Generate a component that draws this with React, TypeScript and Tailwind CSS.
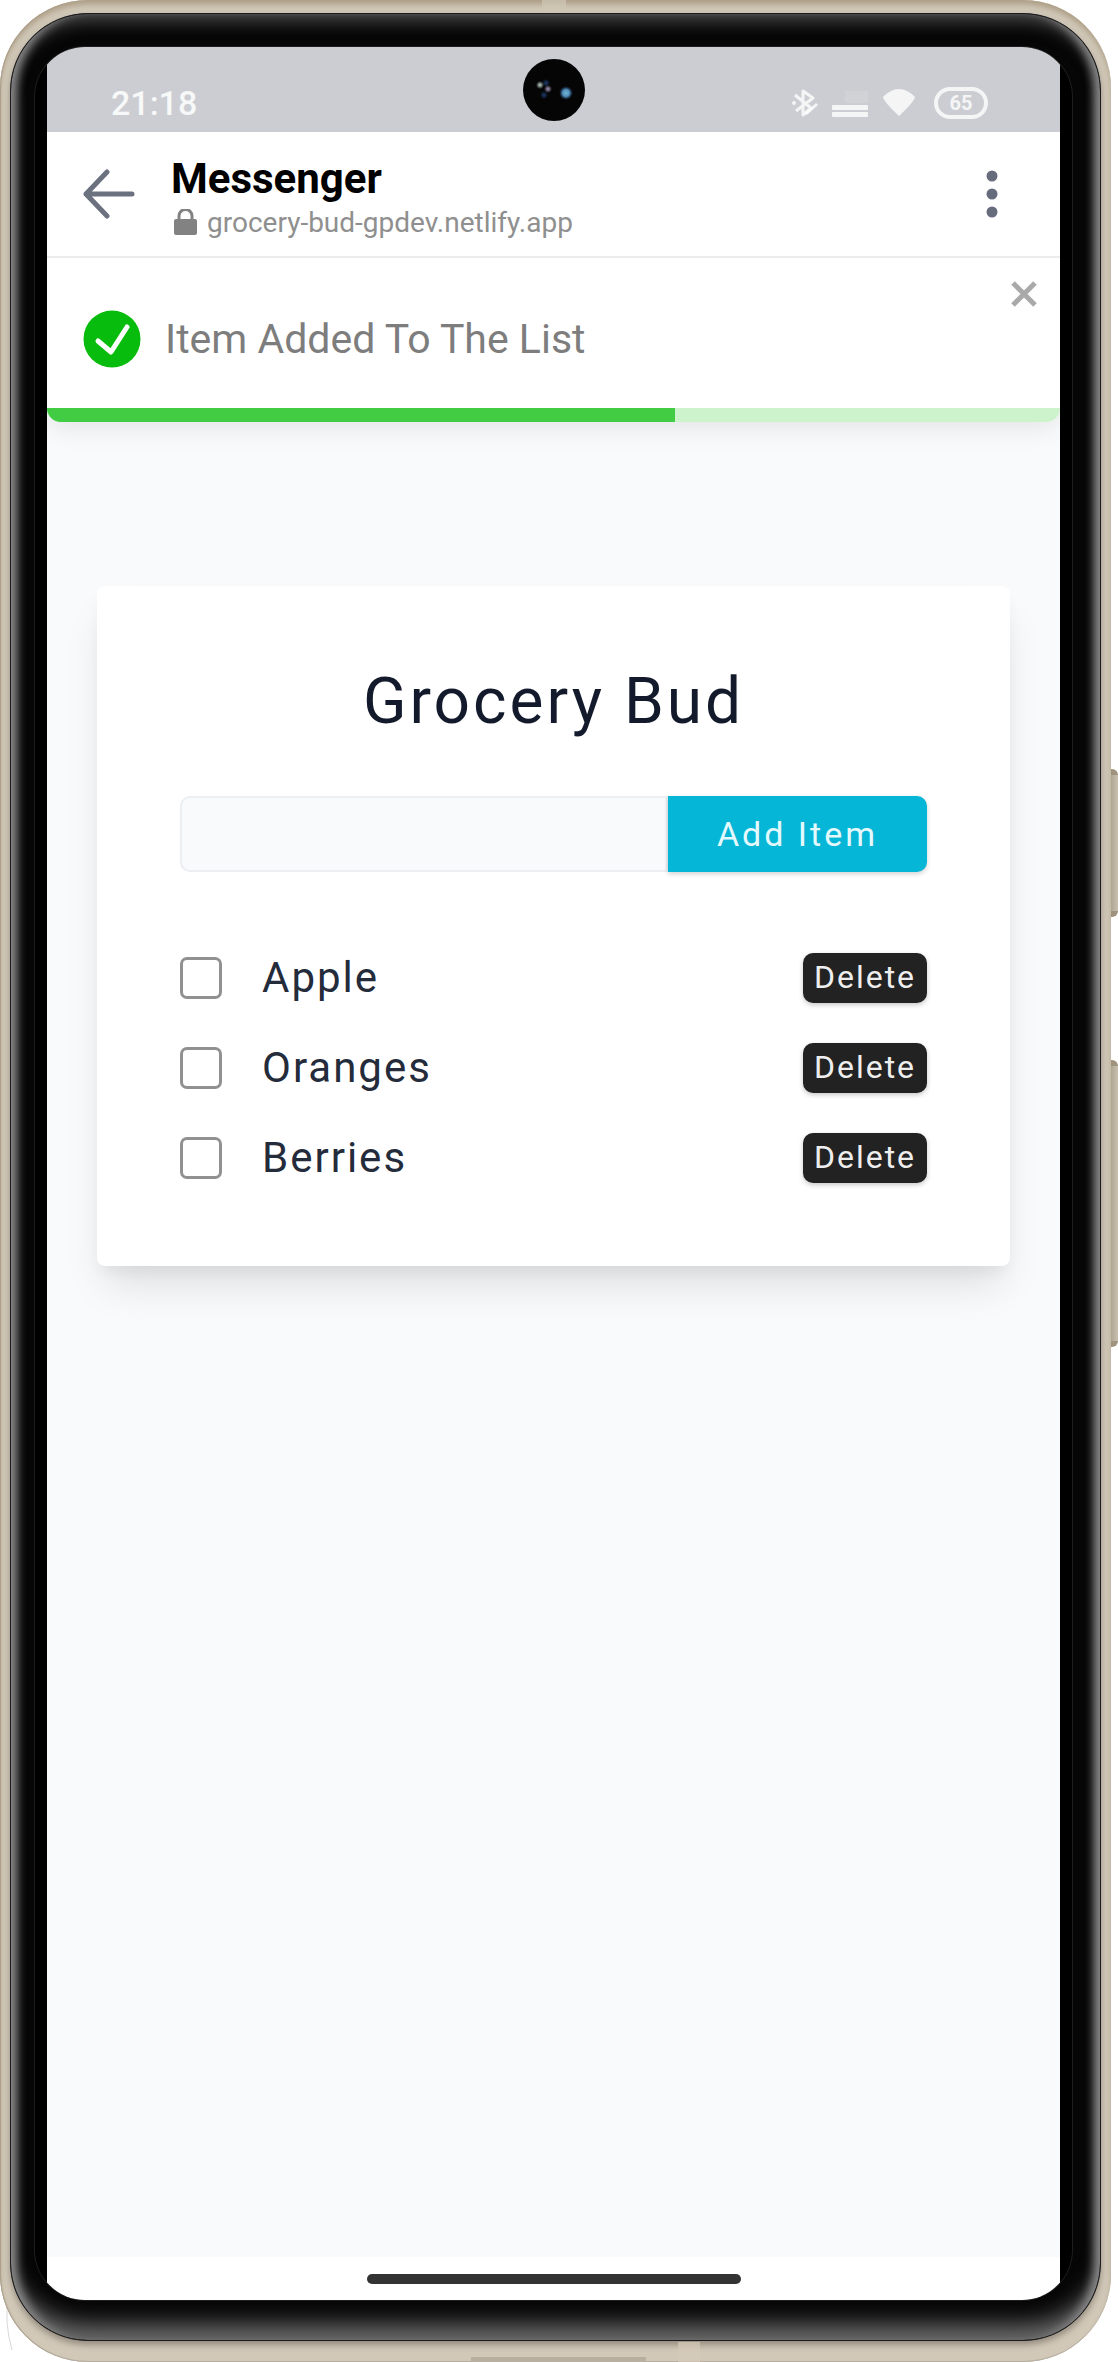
import React from "react";

const ITEMS = ["Apple", "Oranges", "Berries"];

function StatusIcons() {
  return (
    <div className="flex items-center text-white/80">
      <svg aria-hidden="true" width="28" height="30" viewBox="0 0 28 30" fill="none" stroke="currentColor" strokeWidth="3">
        <path d="M4 7 L20 20 L12 27 V3 L22 10 L5 23" strokeLinejoin="round" />
        <path d="M15 26 L26 16" />
        <circle cx="3" cy="15" r="2" fill="currentColor" stroke="none" />
      </svg>
      <svg aria-hidden="true" className="ml-3" width="38" height="30" viewBox="0 0 38 30" fill="currentColor">
        <rect x="14" y="3" width="23" height="12" opacity="0.12" />
        <rect x="1" y="17" width="36" height="5" rx="1" />
        <rect x="1" y="24" width="36" height="5" rx="1" />
      </svg>
      <svg aria-hidden="true" className="ml-3" width="36" height="30" viewBox="0 0 36 30" fill="currentColor">
        <path d="M2 9 Q18 -7 34 9 Q33 14 18 28 Q3 14 2 9 Z" />
      </svg>
      <span className="ml-[17px] flex h-8 w-[54px] items-center justify-center rounded-full border-4 border-current text-[20px] leading-none font-bold">
        65
      </span>
    </div>
  );
}

function StatusBar() {
  return (
    <div className="relative flex h-[85px] items-end justify-between bg-[#cbcdd2] pr-[72px] pb-[13px] pl-16">
      <span className="text-[34px] leading-8 font-medium text-white/85">21:18</span>
      <StatusIcons />
      <svg aria-hidden="true" className="absolute top-3 left-1/2 -translate-x-1/2" width="62" height="62" viewBox="0 0 62 62">
        <defs>
          <radialGradient id="lens">
            <stop offset="0" stopColor="#6fb4d6" />
            <stop offset="0.5" stopColor="#4f8db8" />
            <stop offset="1" stopColor="#1d3f73" stopOpacity="0" />
          </radialGradient>
          <radialGradient id="glint">
            <stop offset="0" stopColor="#c3d6cc" />
            <stop offset="1" stopColor="#c3d6cc" stopOpacity="0" />
          </radialGradient>
          <radialGradient id="violet">
            <stop offset="0" stopColor="#a79bc0" />
            <stop offset="1" stopColor="#a79bc0" stopOpacity="0" />
          </radialGradient>
          <radialGradient id="navy">
            <stop offset="0" stopColor="#1d3c70" />
            <stop offset="1" stopColor="#1d3c70" stopOpacity="0" />
          </radialGradient>
        </defs>
        <circle cx="31" cy="31" r="31" fill="#050505" />
        <circle cx="23" cy="24" r="4" fill="url(#navy)" />
        <circle cx="21" cy="36" r="4" fill="url(#navy)" />
        <circle cx="17" cy="26" r="4" fill="url(#glint)" />
        <circle cx="25" cy="30" r="4" fill="url(#violet)" />
        <circle cx="43" cy="34" r="7" fill="url(#lens)" />
      </svg>
    </div>
  );
}

function BrowserHeader() {
  return (
    <header className="flex h-[126px] items-center border-b-2 border-[#ececee] bg-white pr-[58px] pl-9">
      <button type="button" aria-label="Back" className="text-[#6c7180]">
        <svg width="52" height="52" viewBox="0 0 52 52" fill="none" stroke="currentColor" strokeWidth="5" strokeLinecap="round" strokeLinejoin="round">
          <path d="M49 26 H3 M24 4 L3 26 L24 48" />
        </svg>
      </button>
      <div className="ml-9 flex-1 pt-[10px]">
        <h1 className="text-[42px] leading-[48px] font-bold text-black">Messenger</h1>
        <p className="flex items-center gap-2 text-[28px] leading-10 text-[#8f8f8f]">
          <svg aria-hidden="true" width="28" height="28" viewBox="0 0 28 28" fill="none">
            <rect x="3" y="10" width="23" height="16" rx="2" fill="#828282" />
            <path d="M8 11 V7 a6 6 0 0 1 13 0 V11" stroke="#828282" strokeWidth="3" />
          </svg>
          grocery-bud-gpdev.netlify.app
        </p>
      </div>
      <button type="button" aria-label="Menu" className="text-[#676c7d]">
        <svg width="20" height="52" viewBox="0 0 20 52" fill="currentColor">
          <circle cx="10" cy="8" r="5.5" />
          <circle cx="10" cy="26" r="5.5" />
          <circle cx="10" cy="44" r="5.5" />
        </svg>
      </button>
    </header>
  );
}

function Toast() {
  return (
    <div role="status" className="relative overflow-hidden rounded-b-[14px] bg-white shadow-[0_4px_28px_rgba(0,0,0,0.1)]">
      <div className="flex h-[150px] items-center gap-6 pt-3 pl-9">
        <svg aria-hidden="true" width="58" height="58" viewBox="0 0 58 58" fill="none">
          <circle cx="29" cy="29" r="28.5" fill="#07bc0c" />
          <path d="M15 31 L28 42 L44 17" stroke="#fff" strokeWidth="5" strokeLinecap="round" strokeLinejoin="round" />
        </svg>
        <p className="text-[41px] leading-[48px] text-[#7d7d7d]">Item Added To The List</p>
      </div>
      <button type="button" aria-label="Close" className="absolute top-[22px] right-[22px] text-[#a9a9a9]">
        <svg width="28" height="28" viewBox="0 0 28 28" fill="none" stroke="currentColor" strokeWidth="5">
          <path d="M3 3 L25 25 M25 3 L3 25" />
        </svg>
      </button>
      <div className="h-[14px] bg-[#cdf3cd]">
        <div className="h-full w-[62%] bg-[#41cc44]" />
      </div>
    </div>
  );
}

function GroceryCard() {
  return (
    <section className="mx-[50px] mt-[164px] rounded-lg bg-white px-[83px] pt-[76px] pb-[83px] shadow-[0_26px_39px_-8px_rgba(0,0,0,0.11),0_10px_16px_-5px_rgba(0,0,0,0.06)]">
      <h2 className="text-center text-[64px] leading-[80px] tracking-[3px] text-[#131a2c]">Grocery Bud</h2>
      <form className="mt-[54px] flex h-[76px]" onSubmit={(e) => e.preventDefault()}>
        <input
          type="text"
          aria-label="Grocery item"
          className="min-w-0 flex-1 rounded-l-[10px] border-2 border-[#eceef2] bg-[#f8fafc] px-4 text-[34px] outline-none"
        />
        <button type="submit" className="w-[259px] rounded-r-[10px] bg-[#06b6d6] text-[34px] tracking-[3px] text-[#e4f9fd] shadow-[0_2px_5px_rgba(0,0,0,0.18)]">
          Add Item
        </button>
      </form>
      <ul className="mt-[81px] flex flex-col gap-10">
        {ITEMS.map((item, i) => (
          <li key={item} className="flex h-[50px] items-center">
            <input
              id={`item-${i}`}
              type="checkbox"
              className="size-[42px] appearance-none rounded-[7px] border-[3px] border-[#919191] bg-white checked:bg-[#06b6d6]"
            />
            <label htmlFor={`item-${i}`} className="ml-10 flex-1 text-[42px] leading-[50px] tracking-[2px] text-[#242b3a]">
              {item}
            </label>
            <button type="button" className="h-[50px] w-[124px] rounded-[10px] bg-[#222] pb-[3px] text-[32px] leading-none tracking-[2px] text-[#eee] shadow-[0_2px_5px_rgba(0,0,0,0.22)]">
              Delete
            </button>
          </li>
        ))}
      </ul>
    </section>
  );
}

function SideButtons() {
  return (
    <div aria-hidden="true" className="absolute top-[769px] right-0 flex w-[10px] flex-col gap-[143px]">
      <div className="h-[148px] rounded-r-[6px] border-y-[6px] border-[#9f937d] bg-linear-to-r from-[#a49a86] to-[#c9c0b0]" />
      <div className="h-[287px] rounded-r-[6px] border-y-[6px] border-[#9f937d] bg-linear-to-r from-[#a49a86] to-[#c9c0b0]" />
    </div>
  );
}

function FrameDetails() {
  return (
    <div aria-hidden="true">
      <div className="absolute top-0 left-[542px] h-[13px] w-6 bg-[#cfc6b5]/70" />
      <div className="absolute bottom-0 left-[471px] h-[5px] w-[175px] bg-[#b8afa1]" />
      <div className="absolute bottom-0 left-[678px] h-5 w-[22px] bg-[#d6cbb9]/70" />
    </div>
  );
}

export default function App() {
  return (
    <div className="relative flex min-h-screen flex-col bg-white pr-[7px] font-[Roboto,sans-serif]">
      <SideButtons />
      <svg aria-hidden="true" className="absolute bottom-[10px] left-1" width="12" height="60" viewBox="0 0 12 60" fill="none">
        <path d="M3 0 V30 Q4 44 8 58" stroke="#d8d8d8" strokeWidth="1" />
      </svg>
      <div className="relative flex flex-1 flex-col rounded-[88px] bg-[#d1c8b8] px-[10px] pt-[13px] pb-[21px] shadow-[inset_0_5px_6px_-1px_#aa9b83,inset_1px_0_1px_#a99f8c,inset_0_-1px_0_#b9b0a4]">
        <FrameDetails />
        <div className="flex flex-1 flex-col rounded-[78px] border border-[#1c1c1e] bg-[#060606] pt-[33px] pr-7 pb-10 pl-6 shadow-[inset_12px_0_10px_-6px_#8a8a8a,inset_-12px_0_10px_-6px_#8a8a8a,inset_0_14px_16px_-6px_#454545,inset_0_-26px_22px_-10px_#6a6a6a,0_4px_6px_#968d80]">
          <div className="flex flex-1 flex-col overflow-hidden rounded-[50px] bg-black px-3 shadow-[0_0_0_1px_#1e1e1e]">
            <StatusBar />
            <BrowserHeader />
            <main className="flex-1 overflow-hidden bg-[#f8fafc]">
              <Toast />
              <GroceryCard />
            </main>
            <div className="flex h-[43px] items-center justify-center bg-white">
              <div className="h-[10px] w-[374px] rounded-full bg-[#333]" />
            </div>
          </div>
        </div>
      </div>
    </div>
  );
}
